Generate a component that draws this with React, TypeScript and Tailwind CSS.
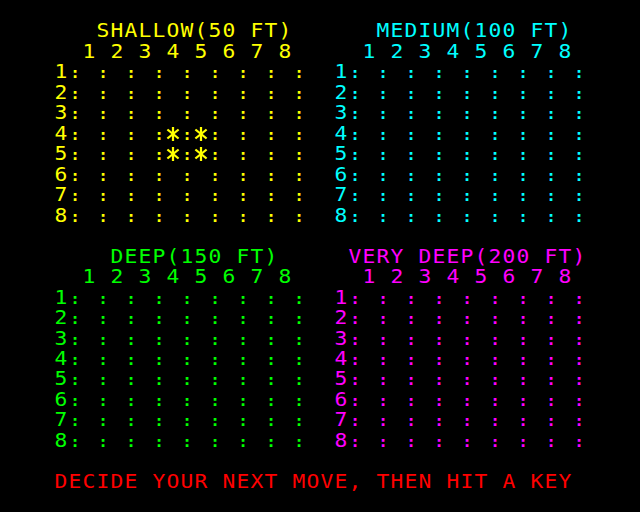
import React from "react";

type Seg = { t: string; c: string };

const Y = "text-[#ffff00]";
const C = "text-[#00ffff]";
const G = "text-[#00ff00]";
const M = "text-[#ff00ff]";
const R = "text-[#ff0000]";

function Star() {
  return (
    <svg width="12" height="14" viewBox="0 0 12 14" className="inline-block align-[-1px]">
      <g stroke="currentColor" strokeWidth="2" strokeLinecap="butt" fill="none">
        <line x1="6" y1="0" x2="6" y2="14" />
        <line x1="1" y1="2.5" x2="11" y2="11.5" />
        <line x1="11" y1="2.5" x2="1" y2="11.5" />
      </g>
    </svg>
  );
}

function Line({ segs }: { segs: Seg[] }) {
  const cells: React.ReactNode[] = [];
  let k = 0;
  segs.forEach((s) => {
    for (const ch of s.t) {
      if (ch === ":") {
        cells.push(
          <span key={k++} className={`inline-block w-[14px] text-center text-[16px] font-bold ${s.c}`}>
            :
          </span>
        );
      } else {
        cells.push(
          <span key={k++} className={`inline-block w-[14px] text-center scale-x-[1.12] ${s.c}`}>
            {ch === "*" ? <Star /> : ch === " " ? "\u00a0" : ch}
          </span>
        );
      }
    }
  });
  return <div className="h-[20.48px] leading-[20.48px] whitespace-pre">{cells}</div>;
}

const grid = (n: number, stars = false) =>
  stars ? `${n}: : : :*:*: : : :` : `${n}: : : : : : : : :`;

export default function App() {
  const rows: Seg[][] = [];
  rows.push([]);
  rows.push([
    { t: "   SHALLOW(50 FT)      ", c: Y },
    { t: "MEDIUM(100 FT)", c: C },
  ]);
  rows.push([
    { t: "  1 2 3 4 5 6 7 8     ", c: Y },
    { t: "1 2 3 4 5 6 7 8", c: C },
  ]);
  for (let i = 1; i <= 8; i++) {
    rows.push([
      { t: grid(i, i === 4 || i === 5) + "  ", c: Y },
      { t: grid(i), c: C },
    ]);
  }
  rows.push([]);
  rows.push([
    { t: "    DEEP(150 FT)     ", c: G },
    { t: "VERY DEEP(200 FT)", c: M },
  ]);
  rows.push([
    { t: "  1 2 3 4 5 6 7 8     ", c: G },
    { t: "1 2 3 4 5 6 7 8", c: M },
  ]);
  for (let i = 1; i <= 8; i++) {
    rows.push([
      { t: grid(i) + "  ", c: G },
      { t: grid(i), c: M },
    ]);
  }
  rows.push([]);
  rows.push([{ t: "DECIDE YOUR NEXT MOVE, THEN HIT A KEY", c: R }]);
  rows.push([]);

  return (
    <div
      className="w-[640px] h-[512px] bg-black pl-[54px] text-[19px] overflow-hidden"
      style={{ fontFamily: '"DejaVu Sans Mono", "Liberation Mono", monospace' }}
    >
      {rows.map((r, i) => (
        <Line key={i} segs={r} />
      ))}
    </div>
  );
}
